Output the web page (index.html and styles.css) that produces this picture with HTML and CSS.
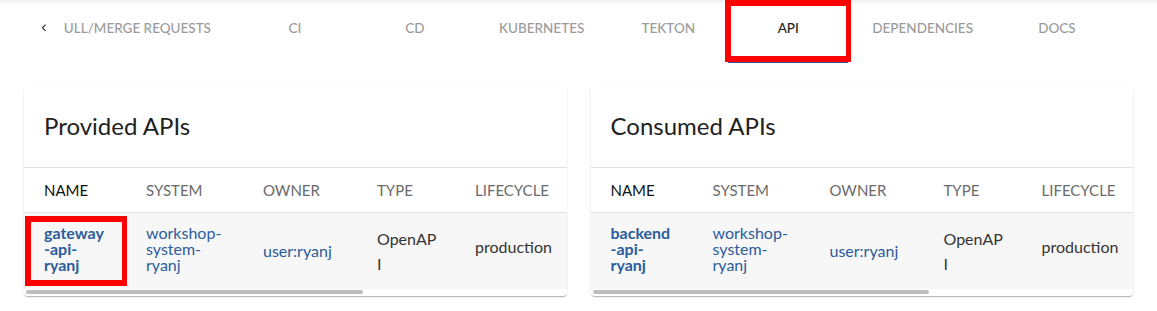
FILE: index.html
```html
<!DOCTYPE html>
<html lang="en">
<head>
<meta charset="utf-8">
<title>API</title>
<link rel="stylesheet" href="styles.css">
</head>
<body>
<div class="topbar">
  <div class="scroll-btn">
    <svg class="chev" viewBox="0 0 24 24" width="14" height="14"><path d="M15.41 16.09l-4.58-4.59 4.58-4.59L14 5.5l-6 6 6 6z"/></svg>
  </div>
  <div class="tabs">
    <div class="tab">PULL/MERGE REQUESTS</div>
    <div class="tab">CI</div>
    <div class="tab">CD</div>
    <div class="tab">KUBERNETES</div>
    <div class="tab">TEKTON</div>
    <div class="tab active">API<span class="mark"></span></div>
    <div class="tab">DEPENDENCIES</div>
    <div class="tab">DOCS</div>
  </div>
  <div class="scroll-btn"></div>
</div>

<div class="main">
  <section class="card">
    <h2 class="card-title">Provided APIs</h2>
    <div class="table-wrap">
      <table class="tbl">
        <colgroup><col class="c1"><col class="c2"><col class="c3"><col class="c4"><col class="c5"><col class="c6"></colgroup>
        <thead>
          <tr><th class="sorted">NAME</th><th>SYSTEM</th><th>OWNER</th><th>TYPE</th><th>LIFECYCLE</th><th></th></tr>
        </thead>
        <tbody>
          <tr>
            <td class="name-cell"><a class="link bold">gateway<br>-api-<br>ryanj</a><span class="mark-cell"></span></td>
            <td><a class="link">workshop-<br>system-<br>ryanj</a></td>
            <td><a class="link">user:ryanj</a></td>
            <td>OpenAP<br>I</td>
            <td class="lc">production</td>
            <td></td>
          </tr>
        </tbody>
      </table>
    </div>
    <div class="hscroll"><div class="thumb"></div></div>
  </section>

  <section class="card">
    <h2 class="card-title">Consumed APIs</h2>
    <div class="table-wrap">
      <table class="tbl">
        <colgroup><col class="c1"><col class="c2"><col class="c3"><col class="c4"><col class="c5"><col class="c6"></colgroup>
        <thead>
          <tr><th class="sorted">NAME</th><th>SYSTEM</th><th>OWNER</th><th>TYPE</th><th>LIFECYCLE</th><th></th></tr>
        </thead>
        <tbody>
          <tr>
            <td class="name-cell"><a class="link bold">backend<br>-api-<br>ryanj</a></td>
            <td><a class="link">workshop-<br>system-<br>ryanj</a></td>
            <td><a class="link">user:ryanj</a></td>
            <td>OpenAP<br>I</td>
            <td class="lc">production</td>
            <td></td>
          </tr>
        </tbody>
      </table>
    </div>
    <div class="hscroll"><div class="thumb"></div></div>
  </section>
</div>
</body>
</html>
```
FILE: styles.css
```css
* { box-sizing: border-box; }
html, body { margin: 0; padding: 0; background: #fff; }
body { font-family: Lato, "Open Sans", sans-serif; color: #333; }

.topbar {
  display: flex;
  height: 63px;
  padding-left: 24px;
  background: linear-gradient(rgba(0,0,0,0.07), rgba(0,0,0,0) 4px);
}
.scroll-btn {
  flex: 0 0 40px;
  height: 56px;
  display: flex;
  align-items: center;
  justify-content: center;
}
.chev { fill: #333; }

.tabs {
  flex: 1 1 auto;
  min-width: 0;
  display: flex;
  justify-content: flex-end;
  overflow: hidden;
}
.tab {
  position: relative;
  flex: 0 0 auto;
  min-width: 120px;
  height: 63px;
  padding: 0 24px 7px;
  display: flex;
  align-items: center;
  justify-content: center;
  font-size: 13.5px;
  font-weight: 500;
  color: #9b9b9b;
  white-space: nowrap;
}
.tab.active { color: #222; }
.tab.active::after {
  content: "";
  position: absolute;
  left: 0; right: 0; bottom: 0;
  height: 3px;
  background: #2d5c99;
}
.mark {
  position: absolute;
  top: 0; left: -3px;
  width: 126px; height: 62px;
  border: 6px solid #ff0000;
  border-right-width: 5px;
  z-index: 2;
}

.main {
  display: grid;
  grid-template-columns: 1fr 1fr;
  gap: 24px;
  padding: 24px;
}
.card {
  background: #fff;
  border-radius: 4px;
  overflow: hidden;
  box-shadow: 0 2px 1px -1px rgba(0,0,0,0.16), 0 1px 1px 0 rgba(0,0,0,0.10), 0 1px 3px 0 rgba(0,0,0,0.10);
  padding-bottom: 1px;
}
.card-title {
  margin: 0;
  padding: 23px 20px 25px;
  font-size: 24px;
  line-height: 32px;
  font-weight: 400;
  color: #222;
  border-bottom: 1px solid #e0e0e0;
}

.table-wrap { overflow: hidden; }

.hscroll {
  height: 6px;
  padding: 1px 2px;
}
.thumb {
  width: 62.5%;
  height: 4px;
  border-radius: 2px;
  background: #bdbdbd;
}

.tbl {
  width: 868px;
  table-layout: fixed;
  border-collapse: collapse;
}
.c1 { width: 102px; }
.c2 { width: 117px; }
.c3 { width: 114px; }
.c4 { width: 98px; }
.c5 { width: 131px; }
.c6 { width: 306px; }

.tbl th {
  height: 44px;
  padding: 0 0 0 20px;
  text-align: left;
  font-size: 15px;
  font-weight: 400;
  color: #6a6a6a;
  border-bottom: 1px solid #e0e0e0;
  white-space: nowrap;
  vertical-align: middle;
}
.tbl th.sorted { color: #111; }
.tbl td {
  height: 73px;
  padding: 12px 0 12px 20px;
  background: #f7f7f7;
  font-size: 16px;
  line-height: 25px;
  color: #333;
  vertical-align: middle;
}
.tbl td.lc { padding-bottom: 20px; }
.name-cell { position: relative; }
.mark-cell {
  position: absolute;
  left: 1px; top: 3px;
  width: 102px; height: 70px;
  border: 6px solid #ff0000;
  border-right-width: 5px;
}
.link {
  display: inline-block;
  line-height: 16px;
  padding-bottom: 4px;
  color: #2b5c9c;
  text-decoration: none;
}
.link.bold { font-weight: 700; }
```
